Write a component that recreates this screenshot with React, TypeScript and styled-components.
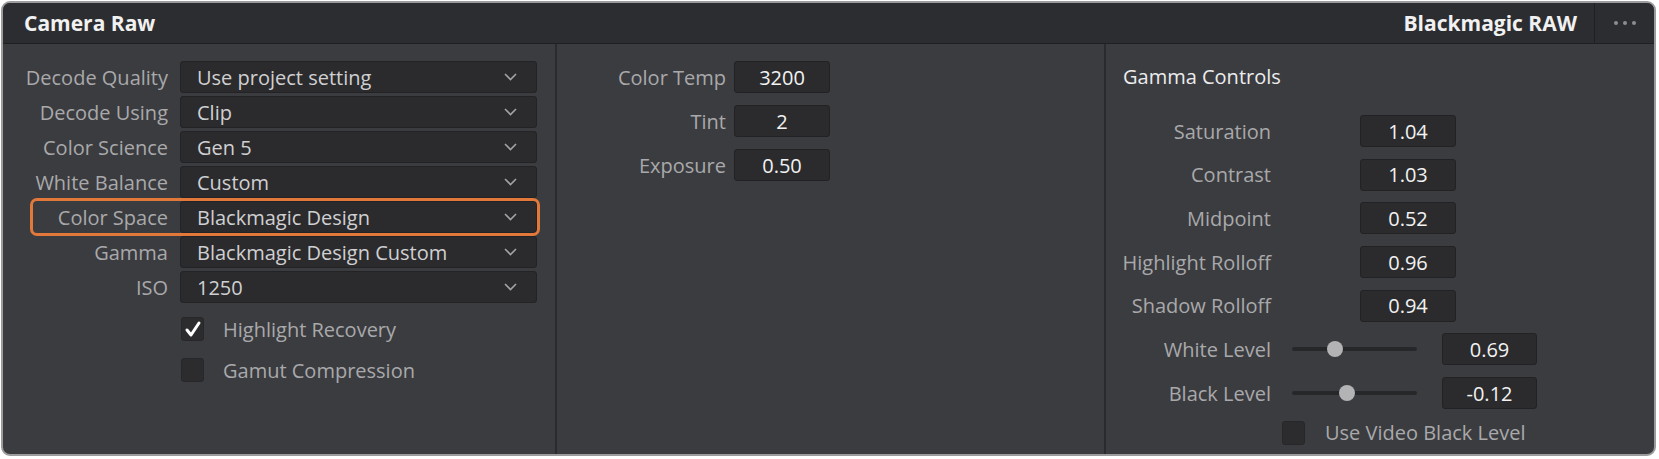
import React from "react";
import styled, { createGlobalStyle } from "styled-components";

const Global = createGlobalStyle`
  html, body { margin: 0; padding: 0; background: #ffffff; }
  body { font-family: "Open Sans", "Noto Sans", sans-serif; -webkit-font-smoothing: antialiased; }
`;

const Frame = styled.div`
  margin: 1px 0 0 1px;
  width: 1655px;
  height: 455px;
  box-sizing: border-box;
  border: 2px solid #9c9c9e;
  border-radius: 9px;
  overflow: hidden;
  background: #3b3c40;
  display: flex;
  flex-direction: column;
`;

const Header = styled.div`
  flex: none;
  height: 40px;
  display: flex;
  align-items: center;
  background: #2c2d30;
  border-bottom: 1px solid #1f2022;
  padding-left: 21px;
`;

const HeaderTitle = styled.div`
  flex: 1;
  font-size: 21px;
  font-weight: 700;
  color: #f1f1f1;
`;

const HeaderBadge = styled.div`
  font-size: 21px;
  font-weight: 700;
  color: #f1f1f1;
  padding-right: 17px;
`;

const MenuButton = styled.div`
  width: 59px;
  height: 100%;
  border-left: 1px solid #1f2022;
  display: flex;
  align-items: center;
  justify-content: center;
  gap: 5px;
`;

const Dot = styled.span`
  width: 4px;
  height: 4px;
  border-radius: 50%;
  background: #8d8d8f;
`;

const Body = styled.div`
  flex: 1;
  display: flex;
`;

const Panel = styled.div<{ $width?: number; $last?: boolean }>`
  box-sizing: border-box;
  ${(p) => (p.$width ? `width: ${p.$width}px; flex: none;` : "flex: 1;")}
  ${(p) => (p.$last ? "" : "border-right: 2px solid #2a2b2e;")}
  padding-top: 17px;
  display: flex;
  flex-direction: column;
`;

const Stack = styled.div<{ $gap: number }>`
  display: flex;
  flex-direction: column;
  gap: ${(p) => p.$gap}px;
`;

const Row = styled.div<{ $highlight?: boolean }>`
  position: relative;
  display: flex;
  align-items: center;
  height: 32px;
  ${(p) =>
    p.$highlight
      ? `&::after {
      content: "";
      position: absolute;
      box-sizing: border-box;
      left: 27px;
      width: 510px;
      top: -3px;
      bottom: -3px;
      border: 3px solid #e2793a;
      border-radius: 7px;
      pointer-events: none;
    }`
      : ""}
`;

const Label = styled.div<{ $width: number; $gap: number }>`
  width: ${(p) => p.$width}px;
  margin-right: ${(p) => p.$gap}px;
  flex: none;
  text-align: right;
  font-size: 20px;
  color: #a9a9ab;
  white-space: nowrap;
`;

const Select = styled.div`
  box-sizing: border-box;
  width: 357px;
  height: 32px;
  display: flex;
  align-items: center;
  justify-content: space-between;
  padding: 0 19px 0 16px;
  background: #2b2b2d;
  border: 1px solid #232325;
  border-radius: 3px;
  font-size: 20px;
  color: #d0d0d2;
`;

const NumberBox = styled.div<{ $ml?: number; $width?: number }>`
  box-sizing: border-box;
  flex: none;
  margin-left: ${(p) => p.$ml ?? 0}px;
  width: ${(p) => p.$width ?? 96}px;
  height: 32px;
  display: flex;
  align-items: center;
  justify-content: center;
  background: #2b2b2d;
  border: 1px solid #222224;
  border-radius: 3px;
  font-size: 20px;
  color: #f2f2f2;
`;

const CheckRow = styled.div<{ $indent: number }>`
  display: flex;
  align-items: center;
  height: 24px;
  padding-left: ${(p) => p.$indent}px;
`;

const Box = styled.div`
  box-sizing: border-box;
  flex: none;
  width: 23px;
  height: 24px;
  background: #2c2c2e;
  border: 1px solid #27272a;
  border-radius: 3px;
  display: flex;
  align-items: center;
  justify-content: center;
`;

const CheckText = styled.span<{ $gap: number }>`
  margin-left: ${(p) => p.$gap}px;
  font-size: 20px;
  color: #a9a9ab;
`;

const Checks = styled.div`
  margin-top: 14px;
  display: flex;
  flex-direction: column;
  gap: 17px;
`;

const SectionTitle = styled.div`
  height: 32px;
  line-height: 32px;
  padding-left: 17px;
  margin-bottom: 22px;
  font-size: 20px;
  font-weight: 500;
  color: #ececee;
`;

const SliderTrack = styled.div`
  position: relative;
  flex: none;
  margin-left: 21px;
  width: 125px;
  height: 4px;
  border-radius: 2px;
  background: #262729;
`;

const Knob = styled.span`
  position: absolute;
  top: 50%;
  width: 16px;
  height: 16px;
  margin: -8px 0 0 -8px;
  border-radius: 50%;
  background: #b3b3b5;
`;

const Chevron = () => (
  <svg width="13" height="8" viewBox="0 0 13 8">
    <polyline points="1,1 6.5,6.5 12,1" fill="none" stroke="#a3a3a5" strokeWidth="1.6" />
  </svg>
);

const Tick = () => (
  <svg width="18" height="18" viewBox="0 0 18 18">
    <path d="M3 10 L7 15 L15 3" fill="none" stroke="#ffffff" strokeWidth="3" strokeLinecap="round" strokeLinejoin="round" />
  </svg>
);

const selects: [string, string][] = [
  ["Decode Quality", "Use project setting"],
  ["Decode Using", "Clip"],
  ["Color Science", "Gen 5"],
  ["White Balance", "Custom"],
  ["Color Space", "Blackmagic Design"],
  ["Gamma", "Blackmagic Design Custom"],
  ["ISO", "1250"],
];

const middle: [string, string][] = [
  ["Color Temp", "3200"],
  ["Tint", "2"],
  ["Exposure", "0.50"],
];

const gamma: [string, string][] = [
  ["Saturation", "1.04"],
  ["Contrast", "1.03"],
  ["Midpoint", "0.52"],
  ["Highlight Rolloff", "0.96"],
  ["Shadow Rolloff", "0.94"],
];

const sliders: [string, string, number][] = [
  ["White Level", "0.69", 34],
  ["Black Level", "-0.12", 44],
];

export default function App() {
  return (
    <>
      <Global />
      <Frame>
        <Header>
          <HeaderTitle>Camera Raw</HeaderTitle>
          <HeaderBadge>Blackmagic RAW</HeaderBadge>
          <MenuButton>
            <Dot />
            <Dot />
            <Dot />
          </MenuButton>
        </Header>
        <Body>
          <Panel $width={554}>
            <Stack $gap={3}>
              {selects.map(([label, value]) => (
                <Row key={label} $highlight={label === "Color Space"}>
                  <Label $width={165} $gap={12}>
                    {label}
                  </Label>
                  <Select>
                    <span>{value}</span>
                    <Chevron />
                  </Select>
                </Row>
              ))}
            </Stack>
            <Checks>
              <CheckRow $indent={178}>
                <Box>
                  <Tick />
                </Box>
                <CheckText $gap={19}>Highlight Recovery</CheckText>
              </CheckRow>
              <CheckRow $indent={178}>
                <Box />
                <CheckText $gap={19}>Gamut Compression</CheckText>
              </CheckRow>
            </Checks>
          </Panel>
          <Panel $width={549}>
            <Stack $gap={12}>
              {middle.map(([label, value]) => (
                <Row key={label}>
                  <Label $width={169} $gap={8}>
                    {label}
                  </Label>
                  <NumberBox>{value}</NumberBox>
                </Row>
              ))}
            </Stack>
          </Panel>
          <Panel $last>
            <SectionTitle>Gamma Controls</SectionTitle>
            <Stack $gap={11.7}>
              {gamma.map(([label, value]) => (
                <Row key={label}>
                  <Label $width={165} $gap={0}>
                    {label}
                  </Label>
                  <NumberBox $ml={89}>{value}</NumberBox>
                </Row>
              ))}
              {sliders.map(([label, value, pct]) => (
                <Row key={label}>
                  <Label $width={165} $gap={0}>
                    {label}
                  </Label>
                  <SliderTrack>
                    <Knob style={{ left: `${pct}%` }} />
                  </SliderTrack>
                  <NumberBox $ml={25} $width={95}>
                    {value}
                  </NumberBox>
                </Row>
              ))}
              <CheckRow $indent={176}>
                <Box />
                <CheckText $gap={20}>Use Video Black Level</CheckText>
              </CheckRow>
            </Stack>
          </Panel>
        </Body>
      </Frame>
    </>
  );
}
